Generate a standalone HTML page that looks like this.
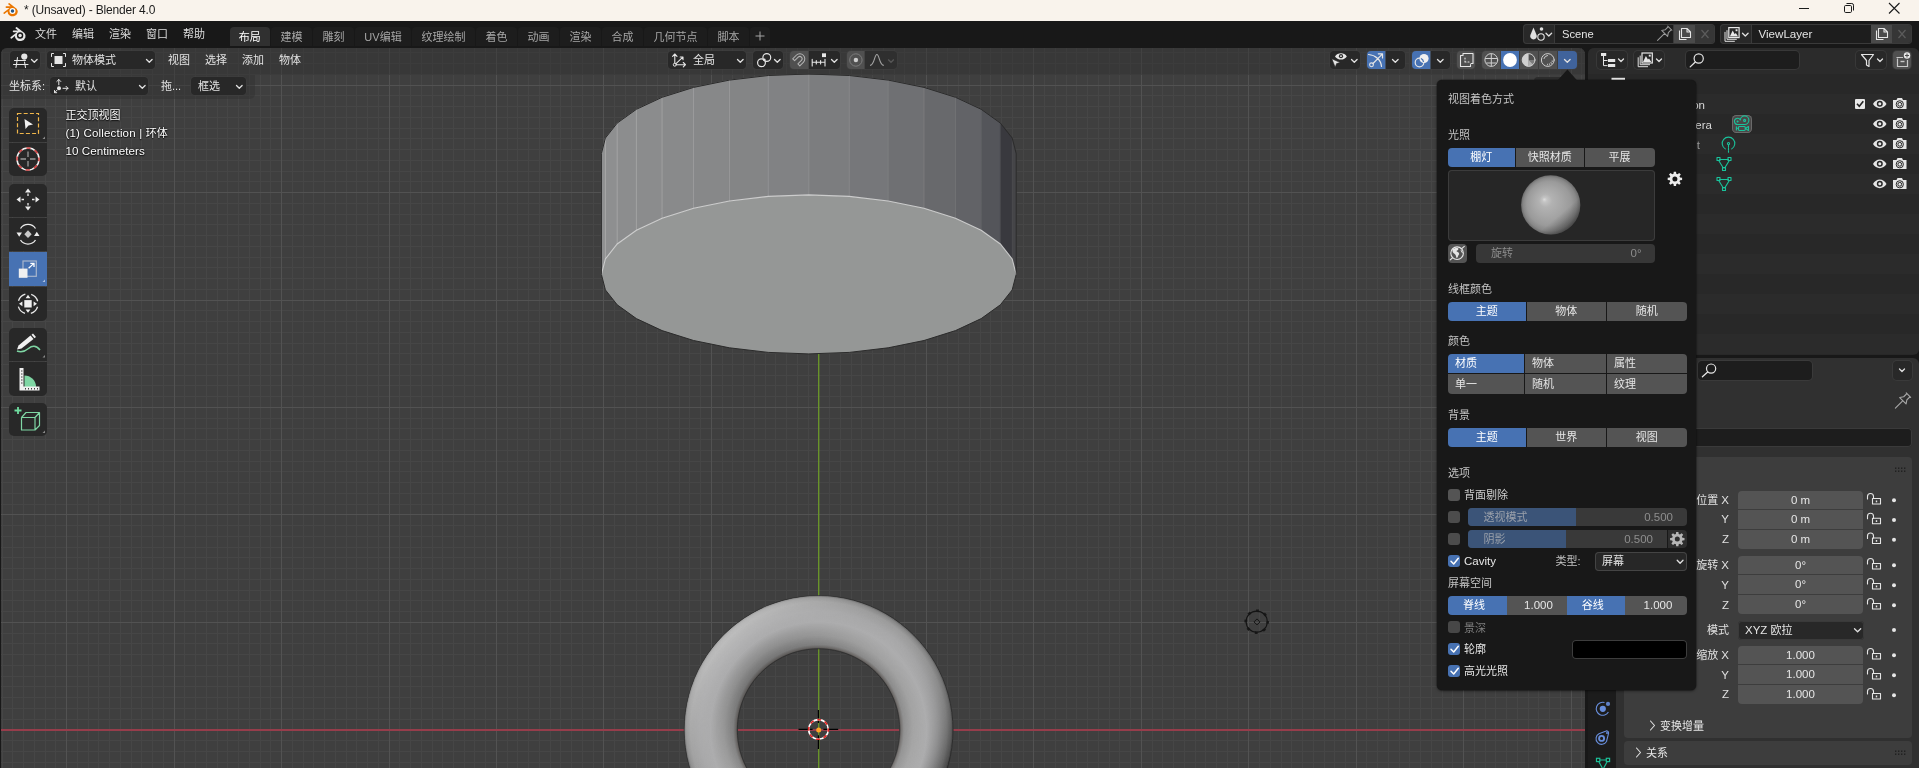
<!DOCTYPE html>
<html lang="zh-CN">
<head>
<meta charset="utf-8">
<title>* (Unsaved) - Blender 4.0</title>
<style>
html,body{margin:0;padding:0;background:#181818;}
body{width:1919px;height:768px;overflow:hidden;position:relative;font-family:"Liberation Sans","Noto Sans CJK SC",sans-serif;font-size:11px;color:#e0e0e0;}
div{box-sizing:border-box}
.a{position:absolute;white-space:nowrap;}
svg{position:absolute;overflow:visible}
#titlebar{position:absolute;left:0;top:0;width:1919px;height:21px;background:#f9f3ec;color:#1b1b1b;}
#topbar{position:absolute;left:0;top:21px;width:1919px;height:27px;background:#181818;}
.mi{position:absolute;top:26px;height:16px;line-height:16px;white-space:nowrap;color:#dcdcdc;font-size:11px}
.tab{position:absolute;top:27px;height:19px;line-height:20px;border-radius:4px 4px 0 0;background:#1d1d1d;color:#a6a6a6;text-align:center;white-space:nowrap;font-size:11px}
.tab.on{background:#303030;color:#fff;}
#vp{position:absolute;left:1px;top:48px;width:1584px;height:720px;background:#3f3f3f;border-radius:6px 6px 0 0;overflow:hidden;}
.hb{position:absolute;height:18px;background:#282828;border-radius:4px;box-shadow:0 0 0 1px rgba(62,62,62,0.7);}
.hb.blue{background:#4772b3;}
.hb.grey{background:#505050;}
.hb.l{border-radius:4px 0 0 4px}
.hb.r{border-radius:0 4px 4px 0}
.hb.m{border-radius:0}
.ht{position:absolute;height:18px;line-height:18px;white-space:nowrap;color:#e2e2e2;font-size:11px}
.tb{position:absolute;left:9px;width:38px;height:34px;background:#282828;}
.tb.on{background:#4772b3;}
.ic{stroke:#e6e6e6;fill:none;stroke-width:1.2;stroke-linecap:round;stroke-linejoin:round}
.chev{stroke:#e0e0e0;fill:none;stroke-width:1.3;stroke-linecap:round;stroke-linejoin:round}
</style>
</head>
<body>
<div id="root" style="position:absolute;left:0;top:0;width:1919px;height:768px;will-change:transform;overflow:hidden">
<!-- TITLE BAR -->
<div id="titlebar">
  <svg style="left:3px;top:3px" width="16" height="14" viewBox="0 0 16 14">
    <path d="M0.7 9.4 L6.6 4.9 L3.4 4.9 A0.85 0.85 0 0 1 3.4 3.2 L7.6 3.2 L5.5 1.6 A0.85 0.85 0 0 1 6.6 0.3 L13.6 5.7 A5.1 4.7 0 1 1 4.5 8.6 L1.7 10.8 A0.85 0.85 0 0 1 0.7 9.4 Z" fill="#ea7600"/>
    <circle cx="9.5" cy="8" r="3" fill="#fff"/>
    <circle cx="9.5" cy="8" r="1.75" fill="#265787"/>
  </svg>
  <div class="a" style="left:24px;top:2px;font-size:12px;letter-spacing:-0.17px;line-height:16px;">* (Unsaved) - Blender 4.0</div>
  <svg style="left:1799px;top:0" width="110" height="21" viewBox="1800 0 110 21">
    <path d="M1800 8.5H1810" stroke="#1b1b1b" stroke-width="1" fill="none"/>
    <rect x="1845.5" y="5.5" width="7" height="7" rx="1.2" stroke="#1b1b1b" stroke-width="1" fill="none"/>
    <path d="M1847.5 3.5H1852.8A1.7 1.7 0 0 1 1854.5 5.2V10.5" stroke="#1b1b1b" stroke-width="1" fill="none"/>
    <path d="M1890 3L1900.5 13.5M1900.5 3L1890 13.5" stroke="#1b1b1b" stroke-width="1.1" fill="none"/>
  </svg>
</div>
<!-- TOPBAR -->
<div id="topbar"></div>
<svg style="left:9.500px;top:27px" width="17" height="14.800" viewBox="0 0 16 14">
  <path d="M0.7 9.4 L6.6 4.9 L3.4 4.9 A0.85 0.85 0 0 1 3.4 3.2 L7.6 3.2 L5.5 1.6 A0.85 0.85 0 0 1 6.6 0.3 L13.6 5.7 A5.1 4.7 0 1 1 4.5 8.6 L1.7 10.8 A0.85 0.85 0 0 1 0.7 9.4 Z" fill="#e6e6e6"/>
  <circle cx="9.5" cy="8" r="3" fill="#181818"/>
  <circle cx="9.5" cy="8" r="1.6" fill="#e6e6e6"/>
</svg>
<div class="mi" style="left:35px">文件</div>
<div class="mi" style="left:72px">编辑</div>
<div class="mi" style="left:109px">渲染</div>
<div class="mi" style="left:146px">窗口</div>
<div class="mi" style="left:183px">帮助</div>
<div class="tab on" style="left:229.5px;width:40.5px">布局</div>
<div class="tab" style="left:271px;width:41px">建模</div>
<div class="tab" style="left:313px;width:41px">雕刻</div>
<div class="tab" style="left:355px;width:56px">UV编辑</div>
<div class="tab" style="left:412px;width:63px">纹理绘制</div>
<div class="tab" style="left:476px;width:41px">着色</div>
<div class="tab" style="left:518px;width:41px">动画</div>
<div class="tab" style="left:560px;width:41px">渲染</div>
<div class="tab" style="left:602px;width:41px">合成</div>
<div class="tab" style="left:644px;width:63px">几何节点</div>
<div class="tab" style="left:708px;width:41px">脚本</div>
<div class="tab" style="left:750px;width:20px"></div>
<svg style="left:755px;top:31px" width="10" height="10" viewBox="0 0 10 10"><path d="M5 0.5V9.5M0.5 5H9.5" stroke="#a6a6a6" stroke-width="1" fill="none"/></svg>
<!-- scene selector -->
<div class="a" style="left:1523px;top:24px;width:192px;height:20px;border-radius:4px;background:#282828;box-shadow:0 0 0 1px #3a3a3a inset"></div>
<div class="a" style="left:1554px;top:24px;width:120px;height:20px;background:#1d1d1d;box-shadow:0 0 0 1px #3a3a3a inset"></div>
<div class="a" style="left:1674px;top:25px;width:21px;height:18px;background:#4a4a4a;"></div>
<div class="a" style="left:1695px;top:25px;width:19px;height:18px;background:#363636;border-radius:0 3px 3px 0"></div>
<div class="a" style="left:1562px;top:24px;line-height:20px;font-size:11.2px;color:#e4e4e4">Scene</div>
<div class="a" style="left:1720px;top:24px;width:192px;height:20px;border-radius:4px;background:#282828;box-shadow:0 0 0 1px #3a3a3a inset"></div>
<div class="a" style="left:1751px;top:24px;width:121px;height:20px;background:#1d1d1d;box-shadow:0 0 0 1px #3a3a3a inset"></div>
<div class="a" style="left:1871px;top:25px;width:21px;height:18px;background:#4a4a4a;"></div>
<div class="a" style="left:1892px;top:25px;width:19px;height:18px;background:#363636;border-radius:0 3px 3px 0"></div>
<div class="a" style="left:1758.5px;top:24px;line-height:20px;font-size:11.6px;color:#e4e4e4">ViewLayer</div>
<svg style="left:1520px;top:21px" width="399" height="27" viewBox="1520 21 399 27">
  <!-- scene icon -->
  <path d="M1533.5 27.5 L1536.6 35 A3.3 3.3 0 1 1 1530.4 35 Z" fill="#e0e0e0"/>
  <circle cx="1541" cy="37" r="3.2" class="ic" style="stroke-width:1.1"/>
  <circle cx="1541.5" cy="29" r="1.8" fill="#e0e0e0"/>
  <path d="M1546 33.200L1548.800 36L1551.600 33.200" class="chev"/>
  <!-- pin -->
  <path transform="translate(1665 33) rotate(45) scale(1.050)" d="M-2.800 -6.500H2.800M-2 -6.500V-2.500L-4 0.500H4L2 -2.500V-6.500M0 0.500V10" stroke="#9a9a9a" stroke-width="1" fill="none" stroke-linecap="round" stroke-linejoin="round"/>
  <!-- copy -->
  <path d="M1679.5 30.5V39.5H1686.5M1681.5 28.5H1687L1690.5 32V37.5H1681.5Z M1687 28.5V32H1690.5" stroke="#e6e6e6" stroke-width="1.1" fill="none" stroke-linejoin="round"/>
  <path d="M1701.5 30L1708.5 38M1708.5 30L1701.5 38" stroke="#5c5c5c" stroke-width="1.2" fill="none"/>
  <!-- viewlayer icon -->
  <g transform="translate(1728.8 27.6)"><path d="M-1.800 2.600V11.700H8M-3.800 4.300V13.700H6" stroke="#e0e0e0" stroke-width="1" fill="none"/><rect x="0" y="0" width="10.300" height="10" stroke="#e8e8e8" stroke-width="1.200" fill="#282828"/><path d="M1 9L3.900 3L5.900 6.600L7 5.400L9.300 9Z" fill="#e8e8e8"/><rect x="6.800" y="1.700" width="1.900" height="1.900" fill="#e8e8e8"/></g>
  <path d="M1742.500 33.200L1745.300 36L1748.100 33.200" class="chev"/>
  <path d="M1876.5 30.5V39.5H1883.5M1878.5 28.5H1884L1887.5 32V37.5H1878.5Z M1884 28.5V32H1887.5" stroke="#e6e6e6" stroke-width="1.1" fill="none" stroke-linejoin="round"/>
  <path d="M1898.5 30L1905.5 38M1905.5 30L1898.5 38" stroke="#5c5c5c" stroke-width="1.2" fill="none"/>
</svg>
<!-- VIEWPORT -->
<div id="vp">
<svg style="left:0;top:0" width="1584" height="720" viewBox="1 48 1584 720">
  <defs>
    <linearGradient id="cylg" x1="601" x2="1016" y1="0" y2="0" gradientUnits="userSpaceOnUse">
      <stop offset="0" stop-color="#8d8e8f"/>
      <stop offset="0.25" stop-color="#858687"/>
      <stop offset="0.5" stop-color="#7e7f81"/>
      <stop offset="0.75" stop-color="#727377"/>
      <stop offset="0.9" stop-color="#65666a"/>
      <stop offset="0.955" stop-color="#56575b"/>
      <stop offset="0.965" stop-color="#3e3e43"/>
      <stop offset="1" stop-color="#38383c"/>
    </linearGradient>
    <radialGradient id="torg" cx="818.6" cy="730" r="135" gradientUnits="userSpaceOnUse">
      <stop offset="0.6015" stop-color="#4e4a48"/>
      <stop offset="0.612" stop-color="#6e6b69"/>
      <stop offset="0.632" stop-color="#8c8c8c"/>
      <stop offset="0.70" stop-color="#a2a2a2"/>
      <stop offset="0.80" stop-color="#adadae"/>
      <stop offset="0.88" stop-color="#a8a8a9"/>
      <stop offset="0.95" stop-color="#9c9c9c"/>
      <stop offset="0.98" stop-color="#868686"/>
      <stop offset="0.9956" stop-color="#5c5c5c"/>
    </radialGradient>
    <linearGradient id="torl" x1="723" y1="635" x2="914" y2="825" gradientUnits="userSpaceOnUse">
      <stop offset="0" stop-color="#fff" stop-opacity="0.42"/>
      <stop offset="0.45" stop-color="#888" stop-opacity="0"/>
      <stop offset="1" stop-color="#000" stop-opacity="0.55"/>
    </linearGradient>
    <linearGradient id="torl2" x1="723" y1="635" x2="914" y2="825" gradientUnits="userSpaceOnUse">
      <stop offset="0" stop-color="#000" stop-opacity="0.42"/>
      <stop offset="0.5" stop-color="#888" stop-opacity="0"/>
      <stop offset="1" stop-color="#fff" stop-opacity="0.30"/>
    </linearGradient>
    <radialGradient id="rmo" cx="818.6" cy="730" r="135" gradientUnits="userSpaceOnUse">
      <stop offset="0.80" stop-color="#000"/><stop offset="0.97" stop-color="#fff"/>
    </radialGradient>
    <radialGradient id="rmi" cx="818.6" cy="730" r="135" gradientUnits="userSpaceOnUse">
      <stop offset="0.62" stop-color="#fff"/><stop offset="0.80" stop-color="#000"/>
    </radialGradient>
    <mask id="mo" maskUnits="userSpaceOnUse" x="680" y="590" width="280" height="180"><circle cx="818.6" cy="730" r="134.4" fill="url(#rmo)"/></mask>
    <mask id="mi" maskUnits="userSpaceOnUse" x="680" y="590" width="280" height="180"><circle cx="818.6" cy="730" r="134.4" fill="url(#rmi)"/></mask>
    <clipPath id="torc"><path d="M818.6 595.6 A134.4 134.4 0 1 0 818.7 595.6 Z M818.6 648.8 A81.2 81.2 0 1 1 818.5 648.8 Z" clip-rule="evenodd"/></clipPath>
  </defs>
  <path d="M2.5 48V768M12.5 48V768M23.5 48V768M34.5 48V768M45.5 48V768M55.5 48V768M77.5 48V768M88.5 48V768M98.5 48V768M109.5 48V768M120.5 48V768M131.5 48V768M141.5 48V768M152.5 48V768M163.5 48V768M184.5 48V768M195.5 48V768M206.5 48V768M217.5 48V768M227.5 48V768M238.5 48V768M249.5 48V768M260.5 48V768M270.5 48V768M292.5 48V768M303.5 48V768M313.5 48V768M324.5 48V768M335.5 48V768M346.5 48V768M356.5 48V768M367.5 48V768M378.5 48V768M399.5 48V768M410.5 48V768M421.5 48V768M432.5 48V768M442.5 48V768M453.5 48V768M464.5 48V768M474.5 48V768M485.5 48V768M507.5 48V768M517.5 48V768M528.5 48V768M539.5 48V768M550.5 48V768M560.5 48V768M571.5 48V768M582.5 48V768M593.5 48V768M614.5 48V768M625.5 48V768M636.5 48V768M646.5 48V768M657.5 48V768M668.5 48V768M679.5 48V768M689.5 48V768M700.5 48V768M722.5 48V768M732.5 48V768M743.5 48V768M754.5 48V768M765.5 48V768M775.5 48V768M786.5 48V768M797.5 48V768M808.5 48V768M829.5 48V768M840.5 48V768M851.5 48V768M861.5 48V768M872.5 48V768M883.5 48V768M894.5 48V768M904.5 48V768M915.5 48V768M937.5 48V768M947.5 48V768M958.5 48V768M969.5 48V768M980.5 48V768M990.5 48V768M1001.5 48V768M1012.5 48V768M1023.5 48V768M1044.5 48V768M1055.5 48V768M1066.5 48V768M1076.5 48V768M1087.5 48V768M1098.5 48V768M1109.5 48V768M1119.5 48V768M1130.5 48V768M1152.5 48V768M1162.5 48V768M1173.5 48V768M1184.5 48V768M1195.5 48V768M1205.5 48V768M1216.5 48V768M1227.5 48V768M1238.5 48V768M1259.5 48V768M1270.5 48V768M1281.5 48V768M1291.5 48V768M1302.5 48V768M1313.5 48V768M1324.5 48V768M1334.5 48V768M1345.5 48V768M1366.5 48V768M1377.5 48V768M1388.5 48V768M1399.5 48V768M1409.5 48V768M1420.5 48V768M1431.5 48V768M1442.5 48V768M1452.5 48V768M1474.5 48V768M1485.5 48V768M1495.5 48V768M1506.5 48V768M1517.5 48V768M1528.5 48V768M1538.5 48V768M1549.5 48V768M1560.5 48V768M1581.5 48V768M1 52.5H1585M1 63.5H1585M1 74.5H1585M1 95.5H1585M1 106.5H1585M1 117.5H1585M1 128.5H1585M1 138.5H1585M1 149.5H1585M1 160.5H1585M1 171.5H1585M1 181.5H1585M1 203.5H1585M1 214.5H1585M1 224.5H1585M1 235.5H1585M1 246.5H1585M1 257.5H1585M1 267.5H1585M1 278.5H1585M1 289.5H1585M1 310.5H1585M1 321.5H1585M1 332.5H1585M1 343.5H1585M1 353.5H1585M1 364.5H1585M1 375.5H1585M1 385.5H1585M1 396.5H1585M1 418.5H1585M1 428.5H1585M1 439.5H1585M1 450.5H1585M1 461.5H1585M1 471.5H1585M1 482.5H1585M1 493.5H1585M1 504.5H1585M1 525.5H1585M1 536.5H1585M1 547.5H1585M1 557.5H1585M1 568.5H1585M1 579.5H1585M1 590.5H1585M1 600.5H1585M1 611.5H1585M1 633.5H1585M1 643.5H1585M1 654.5H1585M1 665.5H1585M1 676.5H1585M1 686.5H1585M1 697.5H1585M1 708.5H1585M1 719.5H1585M1 740.5H1585M1 751.5H1585M1 762.5H1585" stroke="#464646" stroke-width="1" fill="none"/>
  <path d="M66.5 48V768M174.5 48V768M281.5 48V768M389.5 48V768M496.5 48V768M603.5 48V768M711.5 48V768M926.5 48V768M1033.5 48V768M1141.5 48V768M1248.5 48V768M1356.5 48V768M1463.5 48V768M1571.5 48V768M1 85.5H1585M1 192.5H1585M1 300.5H1585M1 407.5H1585M1 514.5H1585M1 622.5H1585" stroke="#525252" stroke-width="1" fill="none"/>
  <!-- axes -->
  <path d="M1 730H1585" stroke="#963d4b" stroke-width="2"/>
  <path d="M818.7 74V768" stroke="#69942a" stroke-width="1.4"/>
  <!-- cylinder -->
  <path d="M601.4 153.5L605.4 138.0L605.4 258.9L601.4 274.4Z" fill="#8f9091" stroke="#8f9091" stroke-width="0.6"/>
  <path d="M605.4 138.0L617.2 123.1L617.2 244.0L605.4 258.9Z" fill="#8e8f90" stroke="#8e8f90" stroke-width="0.6"/>
  <path d="M617.2 123.1L636.4 109.3L636.4 230.2L617.2 244.0Z" fill="#8c8d8e" stroke="#8c8d8e" stroke-width="0.6"/>
  <path d="M636.4 109.3L662.1 97.3L662.1 218.2L636.4 230.2Z" fill="#8b8c8d" stroke="#8b8c8d" stroke-width="0.6"/>
  <path d="M662.1 97.3L693.6 87.4L693.6 208.3L662.1 218.2Z" fill="#898a8b" stroke="#898a8b" stroke-width="0.6"/>
  <path d="M693.6 87.4L729.4 80.1L729.4 201.0L693.6 208.3Z" fill="#878889" stroke="#878889" stroke-width="0.6"/>
  <path d="M729.4 80.1L768.3 75.5L768.3 196.4L729.4 201.0Z" fill="#848586" stroke="#848586" stroke-width="0.6"/>
  <path d="M768.3 75.5L808.8 74.0L808.8 194.9L768.3 196.4Z" fill="#818284" stroke="#818284" stroke-width="0.6"/>
  <path d="M808.8 74.0L849.3 75.5L849.3 196.4L808.8 194.9Z" fill="#7c7d7f" stroke="#7c7d7f" stroke-width="0.6"/>
  <path d="M849.3 75.5L888.2 80.1L888.2 201.0L849.3 196.4Z" fill="#76777a" stroke="#76777a" stroke-width="0.6"/>
  <path d="M888.2 80.1L924.0 87.4L924.0 208.3L888.2 201.0Z" fill="#6f7073" stroke="#6f7073" stroke-width="0.6"/>
  <path d="M924.0 87.4L955.5 97.3L955.5 218.2L924.0 208.3Z" fill="#68696c" stroke="#68696c" stroke-width="0.6"/>
  <path d="M955.5 97.3L981.2 109.3L981.2 230.2L955.5 218.2Z" fill="#626367" stroke="#626367" stroke-width="0.6"/>
  <path d="M981.2 109.3L1000.4 123.1L1000.4 244.0L981.2 230.2Z" fill="#54555a" stroke="#54555a" stroke-width="0.6"/>
  <path d="M1000.4 123.1L1012.2 138.0L1012.2 258.9L1000.4 244.0Z" fill="#39393e" stroke="#39393e" stroke-width="0.6"/>
  <path d="M1012.2 138.0L1016.2 153.5L1016.2 274.4L1012.2 258.9Z" fill="#454548" stroke="#454548" stroke-width="0.6"/>
  <path d="M605.4 138.0V258.9" stroke="#d0d0d0" stroke-opacity="0.44" stroke-width="1"/>
  <path d="M617.2 123.1V244.0" stroke="#d0d0d0" stroke-opacity="0.41" stroke-width="1"/>
  <path d="M636.4 109.3V230.2" stroke="#d0d0d0" stroke-opacity="0.38" stroke-width="1"/>
  <path d="M662.1 97.3V218.2" stroke="#d0d0d0" stroke-opacity="0.36" stroke-width="1"/>
  <path d="M693.6 87.4V208.3" stroke="#d0d0d0" stroke-opacity="0.33" stroke-width="1"/>
  <path d="M729.4 80.1V201.0" stroke="#d0d0d0" stroke-opacity="0.30" stroke-width="1"/>
  <path d="M768.3 75.5V196.4" stroke="#d0d0d0" stroke-opacity="0.27" stroke-width="1"/>
  <path d="M808.8 74.0V194.9" stroke="#d0d0d0" stroke-opacity="0.25" stroke-width="1"/>
  <path d="M849.3 75.5V196.4" stroke="#d0d0d0" stroke-opacity="0.22" stroke-width="1"/>
  <path d="M888.2 80.1V201.0" stroke="#d0d0d0" stroke-opacity="0.19" stroke-width="1"/>
  <path d="M924.0 87.4V208.3" stroke="#d0d0d0" stroke-opacity="0.17" stroke-width="1"/>
  <path d="M955.5 97.3V218.2" stroke="#d0d0d0" stroke-opacity="0.14" stroke-width="1"/>
  <path d="M981.2 109.3V230.2" stroke="#d0d0d0" stroke-opacity="0.12" stroke-width="1"/>
  <path d="M1000.4 123.1V244.0" stroke="#d0d0d0" stroke-opacity="0.09" stroke-width="1"/>
  <path d="M1012.2 138.0V258.9" stroke="#d0d0d0" stroke-opacity="0.07" stroke-width="1"/>
  <path d="M808.8 194.9L849.3 196.4L888.2 201.0L924.0 208.3L955.5 218.2L981.2 230.2L1000.4 244.0L1012.2 258.9L1016.2 274.4L1012.2 289.9L1000.4 304.8L981.2 318.6L955.5 330.6L924.0 340.5L888.2 347.8L849.3 352.4L808.8 353.9L768.3 352.4L729.4 347.8L693.6 340.5L662.1 330.6L636.4 318.6L617.2 304.8L605.4 289.9L601.4 274.4L605.4 258.9L617.2 244.0L636.4 230.2L662.1 218.2L693.6 208.3L729.4 201.0L768.3 196.4Z" fill="#959796"/>
  <path d="M601.4 274.4L605.4 258.9L617.2 244.0L636.4 230.2L662.1 218.2L693.6 208.3L729.4 201.0L768.3 196.4L808.8 194.9L849.3 196.4L888.2 201.0L924.0 208.3L955.5 218.2L981.2 230.2L1000.4 244.0L1012.2 258.9L1016.2 274.4" stroke="#dedede" stroke-opacity="0.8" stroke-width="1.1" fill="none"/>
  <path d="M601.4 153.5L605.4 138.0L617.2 123.1L636.4 109.3L662.1 97.3L693.6 87.4L729.4 80.1L768.3 75.5L808.8 74.0L849.3 75.5L888.2 80.1L924.0 87.4L955.5 97.3L981.2 109.3L1000.4 123.1L1012.2 138.0L1016.2 153.5L1016.2 274.4L1012.2 289.9L1000.4 304.8L981.2 318.6L955.5 330.6L924.0 340.5L888.2 347.8L849.3 352.4L808.8 353.9L768.3 352.4L729.4 347.8L693.6 340.5L662.1 330.6L636.4 318.6L617.2 304.8L605.4 289.9L601.4 274.4Z" stroke="#2b2b2b" stroke-width="1" fill="none" stroke-linejoin="round"/>
  <!-- torus -->
  <path d="M818.6 595.6 A134.4 134.4 0 1 0 818.7 595.6 Z M818.6 648.8 A81.2 81.2 0 1 1 818.5 648.8 Z" fill="url(#torg)" fill-rule="evenodd" stroke="#303030" stroke-width="1"/>
  <g clip-path="url(#torc)"><g mask="url(#mo)"><rect x="680" y="590" width="280" height="180" fill="url(#torl)"/></g><g mask="url(#mi)"><rect x="680" y="590" width="280" height="180" fill="url(#torl2)"/></g></g>
  <!-- 3d cursor -->
  <path d="M798.5 729.3H812.600M823.400 729.300H838.200M818.400 710V723M818.400 735.200V749" stroke="#000" stroke-width="1.200"/>
  <circle cx="818.500" cy="729.400" r="9.800" fill="none" stroke="#fff" stroke-width="1.600"/>
  <circle cx="818.500" cy="729.400" r="9.800" fill="none" stroke="#e62222" stroke-width="1.600" stroke-dasharray="3.850 3.850" stroke-dashoffset="1.500"/>
  <circle cx="818.700" cy="729.900" r="2.500" fill="#ffa229"/>
  <!-- light -->
  <circle cx="1256.700" cy="621.700" r="10.600" fill="none" stroke="#141414" stroke-width="1.100"/>
  <circle cx="1256.700" cy="621.700" r="11" fill="none" stroke="#141414" stroke-width="2.600" stroke-opacity="0.900" stroke-dasharray="2.800 5.840" stroke-dashoffset="1"/>
  <path d="M1257 618.900L1260 621.900L1257 624.900L1254 621.900Z" fill="none" stroke="#141414" stroke-width="1"/>
</svg>
</div>
<!-- viewport header overlays -->
<div class="a" style="left:1px;top:48px;width:1584px;height:27px;background:rgba(48,48,48,0.47);border-radius:6px 6px 0 0"></div>
<div class="a" style="left:1px;top:75px;width:254px;height:24px;background:rgba(48,48,48,0.47);border-radius:0 0 5px 0"></div>
<!-- left header -->
<div class="hb" style="left:10px;top:51px;width:30px"></div>
<div class="hb" style="left:47px;top:51px;width:108px"></div>
<div class="ht" style="left:72px;top:51px">物体模式</div>
<div class="ht" style="left:168px;top:51px">视图</div>
<div class="ht" style="left:205px;top:51px">选择</div>
<div class="ht" style="left:242px;top:51px">添加</div>
<div class="ht" style="left:279px;top:51px">物体</div>
<div class="ht" style="left:9px;top:77px">坐标系:</div>
<div class="hb" style="left:50px;top:77px;width:98px"></div>
<div class="ht" style="left:75px;top:77px">默认</div>
<div class="ht" style="left:161px;top:77px">拖...</div>
<div class="hb" style="left:191px;top:77px;width:55px"></div>
<div class="ht" style="left:198px;top:77px">框选</div>
<!-- center header -->
<div class="hb" style="left:668px;top:51px;width:78px"></div>
<div class="ht" style="left:693px;top:51px">全局</div>
<div class="hb" style="left:753px;top:51px;width:30px"></div>
<div class="hb grey l" style="left:790px;top:51px;width:18.5px"></div>
<div class="hb r" style="left:808.5px;top:51px;width:31.5px"></div>
<div class="hb grey l" style="left:847px;top:51px;width:18px"></div>
<div class="hb r" style="left:865px;top:51px;width:32px;background:#2f2f2f"></div>
<!-- right header -->
<div class="hb" style="left:1330px;top:51px;width:30px"></div>
<div class="hb blue l" style="left:1367px;top:51px;width:18.5px"></div>
<div class="hb r" style="left:1385.5px;top:51px;width:19.5px"></div>
<div class="hb blue l" style="left:1412px;top:51px;width:18.5px"></div>
<div class="hb r" style="left:1430.5px;top:51px;width:19.5px"></div>
<div class="hb grey" style="left:1457px;top:51px;width:18px"></div>
<div class="hb grey l" style="left:1482px;top:51px;width:18.5px"></div>
<div class="hb blue m" style="left:1501px;top:51px;width:18px"></div>
<div class="hb grey m" style="left:1519.5px;top:51px;width:18.5px"></div>
<div class="hb grey m" style="left:1538.5px;top:51px;width:18.5px"></div>
<div class="hb r" style="left:1557.5px;top:51px;width:19.5px;background:#40639b"></div>
<svg style="left:0;top:48px" width="1585" height="51" viewBox="0 48 1585 51">
  <!-- editor type icon: 3d view -->
  <path d="M14.5 60.5H25.5M13.5 64.5H28M17.5 57.5L16 67.5M24.5 62L25.5 67.5" class="ic" style="stroke-width:1.1"/>
  <circle cx="24.3" cy="56.6" r="3.1" fill="#e6e6e6"/>
  <path d="M31.5 59.5L34.3 62.3L37.1 59.5" class="chev"/>
  <!-- object mode icon -->
  <rect x="54.5" y="56" width="8" height="8" fill="#e6e6e6"/>
  <path d="M53.5 53.5H51.5V56.5M63.5 53.5H65.5V56.5M53.5 66.5H51.5V63.5M63.5 66.5H65.5V63.5" class="ic" style="stroke-width:1"/>
  <path d="M146.5 59.5L149.3 62.3L152.1 59.5" class="chev"/>
  <!-- orientation default icon -->
  <path d="M58.8 79.5V84.8M56.8 81.5L58.8 79.5L60.8 81.5M63 88.3H68M66 86.3L68 88.3L66 90.3M57 90.2L54.5 92.7M54.5 90.5V92.7H56.7" class="ic" style="stroke-width:1"/>
  <circle cx="59" cy="88.3" r="2" fill="#e6e6e6"/>
  <path d="M139.5 85.5L142.3 88.3L145.1 85.5" class="chev"/>
  <path d="M236.5 85.5L239.3 88.3L242.1 85.5" class="chev"/>
  <!-- global orientation icon -->
  <path d="M674.8 54V63M672.6 56.300L674.800 54L677 56.300M676.500 64.700H685.500M683.300 62.500L685.500 64.700L683.300 66.900M676.300 63.300L682.800 57.200M680.200 57H683V59.800" class="ic" style="stroke-width:1.100"/>
  <circle cx="674.800" cy="64.700" r="1.500" class="ic" style="stroke-width:1"/>
  <path d="M737.5 59.5L740.3 62.3L743.1 59.5" class="chev"/>
  <!-- pivot icon -->
  <circle cx="761.500" cy="62.800" r="3.900" class="ic" style="stroke-width:1.200"/>
  <circle cx="766.800" cy="57.500" r="3.900" class="ic" style="stroke-width:1.200"/>
  <circle cx="764.300" cy="59.700" r="1.300" fill="#e6e6e6"/>
  <path d="M774.5 59.5L777.3 62.3L780.1 59.5" class="chev"/>
  <!-- snap magnet -->
  <path transform="translate(799.800 58.800) rotate(45)" d="M-5 5V0A5 5 0 0 1 5 0V5H2.300V0A2.300 2.300 0 0 0 -2.300 0V5Z" stroke="#b4b4b4" stroke-width="1" fill="none" stroke-linejoin="round"/>
  <!-- snap increment -->
  <path d="M812.200 62.300H825M812.200 59.200V66M816.300 60.500V64M820.600 60.500V64M825 59.200V66" class="ic" style="stroke-width:1.100"/>
  <rect x="822" y="53.300" width="4" height="3.800" fill="#e6e6e6"/>
  <path d="M831.5 59.5L834.3 62.3L837.1 59.5" class="chev"/>
  <!-- proportional -->
  <circle cx="855.900" cy="60" r="6.200" stroke="#7c7c7c" stroke-width="1" fill="none"/>
  <circle cx="855.900" cy="60" r="2.200" fill="#cdcdcd"/>
  <path d="M870 65.400C874.500 65.400 874.300 54.500 876.900 54.500C879.500 54.500 879.300 65.400 883.800 65.400" stroke="#a4a4a4" stroke-width="1.100" fill="none"/>
  <path d="M888.200 59.500L891 62.300L893.800 59.500" stroke="#585858" stroke-width="1.300" fill="none"/>
  <!-- visibility -->
  <path d="M1335 56.400C1337.500 52.300 1344.500 52.300 1346.800 56.400C1344.500 60.500 1337.500 60.500 1335 56.400Z" fill="#e6e6e6"/>
  <circle cx="1341" cy="56.200" r="2.100" fill="#282828"/>
  <circle cx="1341" cy="56.200" r="0.900" fill="#e6e6e6"/>
  <path d="M1331.800 58.800L1340.200 62.600L1336.600 63.600L1335.200 67.200Z" fill="#e6e6e6" stroke="#282828" stroke-width="0.600"/>
  <path d="M1351.5 59.5L1354.3 62.3L1357.1 59.5" class="chev"/>
  <!-- gizmo -->
  <path d="M1368.500 54.500C1375.500 55 1381 60 1381.500 66.500M1373 63.500L1382 54.300M1378.300 53.800H1382.500V58" class="ic" style="stroke-width:1.200"/>
  <circle cx="1371.500" cy="64.800" r="1.900" class="ic" style="stroke-width:1.100"/>
  <path d="M1392.5 59.5L1395.3 62.3L1398.1 59.5" class="chev"/>
  <!-- overlay -->
  <circle cx="1424" cy="58.500" r="4.600" fill="#f0f0f0"/>
  <circle cx="1419.500" cy="62.500" r="4.300" class="ic" style="stroke-width:1.200"/>
  <path d="M1421 58.500A4.300 4.300 0 0 1 1423.500 62" stroke="#4772b3" stroke-width="1.200" fill="none"/>
  <path d="M1437.5 59.5L1440.3 62.3L1443.1 59.5" class="chev"/>
  <!-- xray -->
  <path d="M1462.500 55.500H1460.500V66.500H1470.500V64.500" class="ic" style="stroke-width:1.100"/>
  <path d="M1463 55.500V53.500H1473V63.500H1471" class="ic" style="stroke-width:1.100"/>
  <path d="M1465 58V59M1465 61V62H1466M1468 62H1469" class="ic" style="stroke-width:1.100"/>
  <!-- shading wire -->
  <circle cx="1491.300" cy="60" r="6.400" class="ic" style="stroke-width:1;stroke:#d0d0d0"/>
  <path d="M1485.500 58.500H1497M1486.500 63H1496M1491.300 54V66" class="ic" style="stroke-width:1;stroke:#d0d0d0"/>
  <circle cx="1510" cy="60" r="6.900" fill="#fff"/>
  <circle cx="1528.600" cy="60" r="6.400" class="ic" style="stroke-width:1;stroke:#d0d0d0"/>
  <path d="M1528.600 53.600A6.400 6.400 0 0 0 1528.600 66.400Z" fill="#d0d0d0"/>
  <path d="M1528.600 60V66.400A6.400 6.400 0 0 0 1533.200 64.500Z" fill="#d0d0d0" fill-opacity="0.750"/>
  <path d="M1528.600 60L1533.200 64.500A6.400 6.400 0 0 0 1535 60Z" fill="#d0d0d0" fill-opacity="0.350"/>
  <circle cx="1547.800" cy="60" r="6.400" class="ic" style="stroke-width:1;stroke:#d0d0d0"/>
  <path d="M1544 58.500A4 4 0 0 1 1547.500 55.500" class="ic" style="stroke-width:1;stroke:#d0d0d0"/>
  <path d="M1547 64.500A5 5 0 0 0 1552.500 60" stroke="#bbb" stroke-width="1.600" fill="none" stroke-dasharray="1 1"/>
  <path d="M1564.5 59.5L1567.3 62.3L1570.1 59.5" class="chev"/>
</svg>
<!-- toolbar -->
<div class="tb" style="top:108px;height:34px;border-radius:5px 5px 0 0"></div>
<div class="tb" style="top:142.500px;height:33.500px;border-radius:0 0 5px 5px"></div>
<div class="tb" style="top:183.500px;height:33px;border-radius:5px 5px 0 0"></div>
<div class="tb" style="top:217.500px;height:33.500px"></div>
<div class="tb on" style="top:251.500px;height:34.500px"></div>
<div class="tb" style="top:286.500px;height:34px;border-radius:0 0 5px 5px"></div>
<div class="tb" style="top:328px;height:33px;border-radius:5px 5px 0 0"></div>
<div class="tb" style="top:362px;height:34px;border-radius:0 0 5px 5px"></div>
<div class="tb" style="top:403px;height:33px;border-radius:5px"></div>
<svg style="left:0;top:100px" width="60" height="340" viewBox="0 100 60 340">
  <!-- select box -->
  <rect x="17.500" y="113.500" width="21" height="20" fill="none" stroke="#f0b64a" stroke-width="1.200" stroke-dasharray="4 2.200"/>
  <path d="M24.500 119L33 124.500L28.500 125.500L25.500 129Z" fill="#f2f2f2"/>
  <path d="M45 136.500V139H42.500Z" fill="#8a8a8a"/>
  <!-- cursor -->
  <circle cx="28" cy="159" r="11" fill="none" stroke="#f4f4f4" stroke-width="1.500"/>
  <circle cx="28" cy="159" r="11" fill="none" stroke="#d03a3a" stroke-width="1.500" stroke-dasharray="4.320 4.320" stroke-dashoffset="2"/>
  <path d="M20.500 159H26M30 159H35.500M28 151.500V157M28 161V166.500" stroke="#9a9a9a" stroke-width="1.300" fill="none"/>
  <!-- move -->
  <path d="M28 188.500L31 192.500H25ZM28 210.500L31 206.500H25ZM16.500 199.500L20.500 196.500V202.500ZM39.500 199.500L35.500 196.500V202.500Z" fill="#ececec"/>
  <path d="M28 193.500V196M28 203V205.500M21.500 199.500H24M32 199.500H34.500" stroke="#ececec" stroke-width="1.300" fill="none"/>
  <!-- rotate -->
  <path d="M20.500 228.500A9 9 0 0 1 35.500 228.500M35.500 240A9 9 0 0 1 20.500 240" stroke="#ececec" stroke-width="1.300" fill="none"/>
  <path d="M16.500 232.500H22L19.200 236.700ZM39.500 236L34 236L36.800 231.800Z" fill="#ececec"/>
  <path d="M28 230.300L31.700 234.200L28 238.100L24.300 234.200Z" fill="#c8c8c8"/>
  <!-- scale -->
  <rect x="23" y="261" width="13.300" height="15.300" stroke="#a9b6cc" stroke-width="1.200" fill="none"/>
  <rect x="18.800" y="268.600" width="8.700" height="9.200" fill="#f0f0f0"/>
  <path d="M28.600 268.300L33.600 263.600M30.300 263.300H34V267" stroke="#fff" stroke-width="1.300" fill="none"/>
  <path d="M45 279.500V282H42.500Z" fill="#b0c4e6"/>
  <!-- transform -->
  <circle cx="28" cy="303.800" r="10" fill="none" stroke="#e8e8e8" stroke-width="1.300" stroke-dasharray="9.700 6" stroke-dashoffset="-3"/>
  <rect x="24.300" y="300.100" width="7.400" height="7.400" fill="#f0f0f0"/>
  <path d="M28 294.800L30.400 298.200H25.600ZM28 312.800L30.400 309.400H25.600ZM19 303.800L22.400 301.400V306.200ZM37 303.800L33.600 301.400V306.200Z" fill="#f0f0f0"/>
  <!-- annotate -->
  <path d="M17 351C22 353 25 351.500 28.500 348.500C32 345.500 36 345 40 350" stroke="#7fd6a4" stroke-width="1.500" fill="none"/>
  <path d="M18.500 345.500L30.500 335.500L33.500 339L21.500 348.500L17 349.500Z" fill="#f0f0f0"/>
  <path d="M31.500 334.800L33 333.500L36 337L34.500 338.200Z" fill="#f0f0f0"/>
  <path d="M45 355V357.500H42.500Z" fill="#8a8a8a"/>
  <!-- measure -->
  <path d="M24.500 387V375.500A11.500 11.500 0 0 1 36 387Z" fill="#7fd6a4"/>
  <path d="M19.500 368H23.500V386.500H39.500V390.500H19.500Z" fill="#f0f0f0"/>
  <path d="M21 371H22.500M21 374H22.500M21 377H22.500M21 380H22.500M21 383H22.500M25.500 388V389.500M28.500 388V389.500M31.500 388V389.500M34.500 388V389.500M37.500 388V389.500" stroke="#282828" stroke-width="0.900"/>
  <!-- add cube -->
  <path d="M14.500 410.500H21.500M18 407V414" stroke="#6fdc9f" stroke-width="1.800" fill="none"/>
  <path d="M21.500 417.500H35V430H21.500ZM21.500 417.500L26 412.500H39.500L35 417.500M39.500 412.500V425.500L35 430" stroke="#7fd6a4" stroke-width="1.200" fill="none" stroke-linejoin="round"/>
  <path d="M45 430.500V433H42.500Z" fill="#8a8a8a"/>
</svg>
<!-- view text overlay -->
<div class="a" style="left:65.500px;top:107px;font-size:11px;line-height:16px;color:#fff;text-shadow:0 0 2px #000,0 1px 1px rgba(0,0,0,.7)">正交顶视图</div>
<div class="a" style="left:65.500px;top:125px;font-size:11.500px;letter-spacing:0.18px;line-height:16px;color:#fff;text-shadow:0 0 2px #000,0 1px 1px rgba(0,0,0,.7)">(1) Collection | <span style="font-size:11px">环体</span></div>
<div class="a" style="left:65.500px;top:143px;font-size:11.600px;letter-spacing:0.05px;line-height:16px;color:#fff;text-shadow:0 0 2px #000,0 1px 1px rgba(0,0,0,.7)">10 Centimeters</div>
<!-- OUTLINER -->
<div class="a" style="left:1588px;top:48px;width:331px;height:306.800px;background:#282828;border-radius:6px;overflow:hidden">
  <div class="a" style="left:0;top:0;width:331px;height:26px;background:#2b2b2b"></div>
  <div class="a" style="left:0;top:46px;width:331px;height:20px;background:#2b2b2b"></div>
  <div class="a" style="left:0;top:86px;width:331px;height:20px;background:#2b2b2b"></div>
  <div class="a" style="left:0;top:126px;width:331px;height:20px;background:#2b2b2b"></div>
  <div class="a" style="left:0;top:166px;width:331px;height:20px;background:#2b2b2b"></div>
  <div class="a" style="left:0;top:206px;width:331px;height:20px;background:#2b2b2b"></div>
  <div class="a" style="left:0;top:246px;width:331px;height:20px;background:#2b2b2b"></div>
  <div class="a" style="left:0;top:286px;width:331px;height:20px;background:#2b2b2b"></div>
</div>
<div class="hb" style="left:1597px;top:51px;width:29.500px;height:18px"></div>
<div class="hb" style="left:1634.300px;top:51px;width:29.500px;height:18px"></div>
<div class="hb" style="left:1686px;top:51px;width:113px;height:18px;background:#1d1d1d"></div>
<div class="hb" style="left:1856.300px;top:51px;width:29.500px;height:18px"></div>
<div class="hb grey" style="left:1893px;top:51px;width:18px;height:18px"></div>
<div class="a" style="left:1630px;top:78.5px;font-size:11px;line-height:16px;color:#d8d8d8">场景集合</div>
<div class="a" style="left:1654.500px;top:97px;font-size:11.500px;line-height:16px;color:#d8d8d8">Collection</div>
<div class="a" style="left:1671px;top:117px;font-size:11.500px;line-height:16px;color:#d8d8d8">Camera</div>
<div class="a" style="left:1675px;top:137px;font-size:11.500px;line-height:16px;color:#9a9a9a">Light</div>
<div class="a" style="left:1673px;top:156px;font-size:11px;line-height:16px;color:#d8d8d8">柱体</div>
<div class="a" style="left:1673px;top:176px;font-size:11px;line-height:16px;color:#d8d8d8">环体</div>
<div class="a" style="left:1732px;top:115px;width:20px;height:18px;border-radius:4.500px;background:#4a4848;box-shadow:0 0 0 1px #6a6a6a inset"></div>
<svg style="left:1588px;top:48px" width="331" height="310" viewBox="1588 48 331 310">
  <!-- outliner editor icon -->
  <rect x="1601" y="53" width="5.200" height="3" fill="#e6e6e6"/>
  <rect x="1608" y="59" width="7.200" height="3" fill="#e6e6e6"/>
  <rect x="1608" y="64" width="7.200" height="3" fill="#e6e6e6"/>
  <path d="M1603.500 56V65.600H1607.500M1603.500 60.500H1607.500" class="ic" style="stroke-width:1;stroke-linecap:butt"/>
  <path d="M1618.500 59L1621 61.500L1623.500 59" class="chev"/>
  <!-- display mode icon (view layer) -->
  <g transform="translate(1642 53)"><path d="M-1.800 2.600V11.700H8M-3.800 4.300V13.700H6" stroke="#e0e0e0" stroke-width="1" fill="none"/><rect x="0" y="0" width="10.300" height="10" stroke="#e8e8e8" stroke-width="1.200" fill="#282828"/><path d="M1 9L3.900 3L5.900 6.600L7 5.400L9.300 9Z" fill="#e8e8e8"/><rect x="6.800" y="1.700" width="1.900" height="1.900" fill="#e8e8e8"/></g>
  <path d="M1656.500 59L1659 61.500L1661.500 59" class="chev"/>
  <!-- search -->
  <circle cx="1698.700" cy="58.500" r="4.600" class="ic" style="stroke-width:1.200"/>
  <path d="M1695.300 62L1690.200 66.900" class="ic" style="stroke-width:1.300"/>
  <!-- filter -->
  <path d="M1861.500 54.500H1873.500L1869 60.500V66.500L1866.500 65V60.500Z" class="ic" style="stroke-width:1.200"/>
  <path d="M1877.500 59L1880 61.500L1882.500 59" class="chev"/>
  <!-- new collection -->
  <path d="M1896.500 57.500H1903M1897.500 58.500V66.500H1907.500V60" stroke="#c8c8c8" stroke-width="1.200" fill="none"/>
  <path d="M1900.500 61.500H1904.500" stroke="#c8c8c8" stroke-width="1.400"/>
  <circle cx="1907" cy="55.500" r="3.200" fill="#e6e6e6"/>
  <path d="M1905 55.500H1909M1907 53.500V57.500" stroke="#4d4d4d" stroke-width="1"/>
  <!-- scene collection icon peek -->
  <rect x="1611.500" y="77.800" width="13.500" height="3" fill="#e6e6e6"/>
  <!-- row icons -->
  <rect x="1855" y="99" width="10" height="10" rx="1" fill="#e8e8e8"/>
  <path d="M1857 103.800L1859.300 106.300L1863.300 101.300" stroke="#222" stroke-width="1.600" fill="none"/>
  <g id="eye"><path d="M1873 104C1876 98 1883.500 98 1886.500 104C1883.500 109.500 1876 109.500 1873 104Z" fill="#e6e6e6"/><circle cx="1879.800" cy="103.700" r="3" fill="#282828"/><circle cx="1879.800" cy="103.700" r="1.500" fill="#e6e6e6"/></g>
  <g id="cam"><path d="M1893 100H1896.500L1897.500 98H1902L1903 100H1906.500V109H1893Z" fill="#e6e6e6"/><circle cx="1899.800" cy="104.300" r="3.600" fill="none" stroke="#282828" stroke-width="1"/><circle cx="1899.800" cy="104.300" r="1.900" fill="none" stroke="#282828" stroke-width="1"/></g>
  <use href="#eye" y="20"/><use href="#cam" y="20"/>
  <use href="#eye" y="40"/><use href="#cam" y="40"/>
  <use href="#eye" y="60"/><use href="#cam" y="60"/>
  <use href="#eye" y="80"/><use href="#cam" y="80"/>
  <!-- camera data -->
  <g stroke="#1ac29b" stroke-width="1.100" fill="none" stroke-linejoin="round" stroke-linecap="round">
    <path d="M1737.500 124.500A3.100 3.100 0 1 1 1740.300 120A4.300 4.300 0 1 1 1744.500 124.500Z"/>
    <circle cx="1737.600" cy="121.500" r="0.500"/><circle cx="1744.600" cy="120.400" r="1"/>
    <path d="M1739.400 126.500H1744.300Q1745.200 126.500 1745.200 127.400V129.600Q1745.200 130.500 1744.300 130.500H1739.400Q1738.500 130.500 1738.500 129.600V127.400Q1738.500 126.500 1739.400 126.500ZM1745.200 128.400L1748.500 126.500V130.500ZM1738.500 128.300H1736.400M1736.400 126.700V129.900"/>
    <path d="M1725.300 148.900A6.300 6.300 0 1 1 1731.700 148.900"/>
    <circle cx="1728.500" cy="143.600" r="1.100"/>
    <path d="M1728.500 145V147.200M1728.500 148.400V150M1728.500 151V152.300"/>
    <path d="M1719.500 159.500H1728.500M1719 161L1723.300 168M1729 161L1724.700 168"/>
    <rect x="1717" y="157.500" width="3" height="3"/><rect x="1728" y="157.500" width="3" height="3"/><rect x="1722.500" y="167.500" width="3" height="3"/>
    <path d="M1719.500 179.500H1728.500M1719 181L1723.300 188M1729 181L1724.700 188"/>
    <rect x="1717" y="177.500" width="3" height="3"/><rect x="1728" y="177.500" width="3" height="3"/><rect x="1722.500" y="187.500" width="3" height="3"/>
  </g>
</svg>
<!-- PROPERTIES -->
<div class="a" style="left:1588px;top:357.500px;width:331px;height:412px;background:#303030;border-radius:6px 6px 0 0;overflow:hidden">
  <div class="a" style="left:0;top:26px;width:28px;height:390px;background:#1c1c1c"></div>
</div>
<div class="hb" style="left:1697.500px;top:360.500px;width:114px;height:19px;background:#1d1d1d"></div>
<div class="hb" style="left:1892.500px;top:360.500px;width:19px;height:19px"></div>
<div class="a" style="left:1640px;top:427.500px;width:271.500px;height:19px;border-radius:4px;background:#1d1d1d;box-shadow:0 0 0 1px #3a3a3a inset"></div>
<div class="a" style="left:1624px;top:457px;width:288px;height:280.500px;border-radius:4px;background:#3d3d3d"></div>
<div class="a" style="left:1624px;top:740.500px;width:288px;height:24px;border-radius:4px;background:#3d3d3d"></div>
<div class="a" style="left:1624px;top:767.500px;width:288px;height:23px;border-radius:4px;background:#3d3d3d"></div>
<style>
.fld{position:absolute;left:1738px;width:125px;height:19px;background:#545454;color:#e6e6e6;text-align:center;line-height:19px;font-size:11.500px}
.fld.t{border-radius:4px 4px 0 0}.fld.b{border-radius:0 0 4px 4px}
.lbl{position:absolute;left:1629px;width:100px;text-align:right;line-height:19px;height:19px;font-size:11px;color:#e0e0e0;white-space:nowrap}
.lbl b{font-weight:normal;font-size:11.500px}
</style>
<div class="lbl" style="top:491.1px;height:18.2px;line-height:18.2px">位置 <b>X</b></div>
<div class="fld t" style="top:490.8px;height:18.2px;line-height:18.2px">0 m</div>
<div class="lbl" style="top:510.3px;height:19px;line-height:19px"><b>Y</b></div>
<div class="fld" style="top:510px;height:19px;line-height:19px">0 m</div>
<div class="lbl" style="top:530.3px;height:19px;line-height:19px"><b>Z</b></div>
<div class="fld b" style="top:530px;height:19px;line-height:19px">0 m</div>
<div class="lbl" style="top:556.3px;height:18.4px;line-height:18.4px">旋转 <b>X</b></div>
<div class="fld t" style="top:556px;height:18.4px;line-height:18.4px">0°</div>
<div class="lbl" style="top:575.7px;height:18.8px;line-height:18.8px"><b>Y</b></div>
<div class="fld" style="top:575.4px;height:18.8px;line-height:18.8px">0°</div>
<div class="lbl" style="top:595.5px;height:19px;line-height:19px"><b>Z</b></div>
<div class="fld b" style="top:595.2px;height:19px;line-height:19px">0°</div>
<div class="lbl" style="top:620.800px">模式</div>
<div class="a" style="left:1738px;top:621px;width:126px;height:18.500px;border-radius:4px;background:#282828;box-shadow:0 0 0 1px #3a3a3a inset"></div>
<div class="a" style="left:1745px;top:621px;line-height:18.500px;font-size:11.500px;color:#e6e6e6">XYZ <span style="font-size:11px">欧拉</span></div>
<div class="lbl" style="top:646.3px;height:18.2px;line-height:18.2px">缩放 <b>X</b></div>
<div class="fld t" style="top:646px;height:18.2px;line-height:18.2px">1.000</div>
<div class="lbl" style="top:665.5px;height:18.8px;line-height:18.8px"><b>Y</b></div>
<div class="fld" style="top:665.2px;height:18.8px;line-height:18.8px">1.000</div>
<div class="lbl" style="top:685.3px;height:19.3px;line-height:19.3px"><b>Z</b></div>
<div class="fld b" style="top:685px;height:19.3px;line-height:19.3px">1.000</div>
<div class="a" style="left:1660px;top:717.500px;line-height:16px;font-size:11px;color:#e6e6e6">变换增量</div>
<div class="a" style="left:1646px;top:745px;line-height:16px;font-size:11px;color:#e6e6e6">关系</div>
<svg style="left:1588px;top:357px" width="331" height="411" viewBox="1588 357 331 411">
  <circle cx="1711.100" cy="368.600" r="4.600" class="ic" style="stroke-width:1.200"/>
  <path d="M1707.700 372L1702.400 376.700" class="ic" style="stroke-width:1.300"/>
  <path d="M1899.500 369L1902 371.500L1904.500 369" class="chev"/>
  <!-- pin -->
  <path transform="translate(1903.300 400.300) rotate(45) scale(1.120)" d="M-2.800 -6.500H2.800M-2 -6.500V-2.500L-4 0.500H4L2 -2.500V-6.500M0 0.500V10" stroke="#a8a8a8" stroke-width="1" fill="none" stroke-linecap="round" stroke-linejoin="round"/>
  <g fill="#1f1f1f"><g id="dots"><rect x="1895" y="467.500" width="1.400" height="1.400"/><rect x="1898" y="467.500" width="1.400" height="1.400"/><rect x="1901" y="467.500" width="1.400" height="1.400"/><rect x="1904" y="467.500" width="1.400" height="1.400"/><rect x="1895" y="470.500" width="1.400" height="1.400"/><rect x="1898" y="470.500" width="1.400" height="1.400"/><rect x="1901" y="470.500" width="1.400" height="1.400"/><rect x="1904" y="470.500" width="1.400" height="1.400"/></g>
  <use href="#dots" y="283"/></g>
  <g id="lk"><path d="M1867.500 499V496.500A3 3 0 0 1 1873.500 496.500V498.500" class="ic" style="stroke-width:1.100"/><rect x="1872.500" y="498.500" width="8" height="5.500" class="ic" style="stroke-width:1.100"/><rect x="1875.800" y="500.500" width="1.400" height="1.800" fill="#e6e6e6"/><circle cx="1894" cy="500.200" r="2" fill="#e6e6e6"/></g>
  <use href="#lk" y="19.700"/><use href="#lk" y="39.500"/>
  <use href="#lk" y="65"/><use href="#lk" y="85"/><use href="#lk" y="105"/>
  <use href="#lk" y="155"/><use href="#lk" y="175"/><use href="#lk" y="195"/>
  <circle cx="1894" cy="630" r="2" fill="#e6e6e6"/>
  <path d="M1854.500 628.800L1857.600 631.800L1860.700 628.800" class="chev"/>
  <path d="M1650.500 721L1654.500 725.500L1650.500 730" class="chev" style="stroke-width:1.100"/>
  <path d="M1636.500 748L1640.500 752.500L1636.500 757" class="chev" style="stroke-width:1.100"/>
  <!-- tabs icons -->
  <g stroke="#688edc" stroke-width="1.100" fill="none">
    <path d="M1604.500 702.500A6.500 6.500 0 1 0 1608.400 712"/>
    <circle cx="1602.800" cy="708.800" r="3.100" fill="#688edc" stroke="none"/>
    <circle cx="1608" cy="703.900" r="2.100" fill="#5f80c6" stroke="none"/>
    <path d="M1608.600 733.200C1608.800 731.200 1607 730.500 1605.500 731.200L1599 733.800A5.600 5.600 0 1 0 1606.500 741.500Z" stroke-linejoin="round"/>
    <circle cx="1601.600" cy="738.400" r="2.500" stroke-width="1.900"/>
    <circle cx="1607" cy="733" r="1" fill="#688edc" stroke="none"/>
  </g>
  <g stroke="#1dbf98" stroke-width="1.200" fill="none"><path d="M1600 760H1606M1599 762L1602.300 768M1607 762L1603.700 768"/><rect x="1596.500" y="758.300" width="3.300" height="3.300"/><rect x="1606.300" y="758.300" width="3.300" height="3.300"/></g>
</svg>
<!-- POPOVER -->
<div class="a" style="left:1534px;top:76.500px;width:40px;height:5px;background:#2c2c2c;border-radius:4px 0 0 0"></div>
<style>
.pb{position:absolute;height:19px;line-height:19px;background:#545454;color:#e6e6e6;text-align:center;font-size:11px;white-space:nowrap}
.pb.on{background:#4772b3;color:#fff}
.pb.tl{text-align:left;padding-left:7.500px}
.pl{position:absolute;left:1448px;line-height:16px;font-size:11px;color:#c4c4c4;white-space:nowrap}
.cb{position:absolute;left:1447.800px;width:12.400px;height:12.400px;border-radius:3px;background:#545454}
.cb.on{background:#4772b3}
.cb.dim{background:#474747}
</style>
<div class="a" style="left:1437.200px;top:79.500px;width:259.300px;height:610.300px;background:#181818;border-radius:5px;box-shadow:0 1px 3px rgba(0,0,0,0.5),0 0 0 0.500px rgba(20,20,20,0.5)"></div>
<svg style="left:1555px;top:70px" width="24" height="11" viewBox="1555 70 24 11"><path d="M1557.500 80.500L1567.400 69.600L1577.200 80.500Z" fill="#181818"/></svg>
<div class="pl" style="top:90.500px">视图着色方式</div>
<div class="pl" style="top:126.500px">光照</div>
<div class="pb on" style="left:1447.500px;top:147.500px;width:67.5px;border-radius:4px 0 0 4px">棚灯</div>
<div class="pb" style="left:1515.500px;top:147.500px;width:68.500px">快照材质</div>
<div class="pb" style="left:1584.500px;top:147.500px;width:70px;border-radius:0 4px 4px 0">平展</div>
<div class="a" style="left:1447.500px;top:169.500px;width:207px;height:71.500px;border-radius:4px;background:#262626;box-shadow:0 0 0 1px #3c3c3c inset"></div>
<div class="a" style="left:1447.500px;top:243.500px;width:19px;height:19px;border-radius:4px;background:#545454"></div>
<div class="a" style="left:1475.500px;top:243.500px;width:179px;height:19px;border-radius:4px;background:#373737"></div>
<div class="a" style="left:1491px;top:243.500px;line-height:19px;font-size:11px;color:#8c8c8c">旋转</div>
<div class="a" style="left:1611px;top:243.500px;width:30.500px;text-align:right;line-height:19px;font-size:11.500px;color:#8c8c8c">0°</div>
<div class="pl" style="top:280.500px">线框颜色</div>
<div class="pb on" style="left:1447.500px;top:301.500px;width:78.5px;border-radius:4px 0 0 4px">主题</div>
<div class="pb" style="left:1526.500px;top:301.500px;width:79.500px">物体</div>
<div class="pb" style="left:1606.500px;top:301.500px;width:80.500px;border-radius:0 4px 4px 0">随机</div>
<div class="pl" style="top:332.500px">颜色</div>
<div class="pb on tl" style="left:1447.500px;top:353.500px;width:76.5px;height:19.500px;border-radius:4px 0 0 0">材质</div>
<div class="pb tl" style="left:1524.500px;top:353.500px;width:81.500px;height:19.500px">物体</div>
<div class="pb tl" style="left:1606.500px;top:353.500px;width:80.500px;height:19.500px;border-radius:0 4px 0 0">属性</div>
<div class="pb tl" style="left:1447.500px;top:373.500px;width:76.5px;height:20.500px;line-height:20.500px;border-radius:0 0 0 4px">单一</div>
<div class="pb tl" style="left:1524.500px;top:373.500px;width:81.500px;height:20.500px;line-height:20.500px">随机</div>
<div class="pb tl" style="left:1606.500px;top:373.500px;width:80.500px;height:20.500px;line-height:20.500px;border-radius:0 0 4px 0">纹理</div>
<div class="pl" style="top:407px">背景</div>
<div class="pb on" style="left:1447.500px;top:427.500px;width:78.5px;border-radius:4px 0 0 4px">主题</div>
<div class="pb" style="left:1526.500px;top:427.500px;width:79.500px">世界</div>
<div class="pb" style="left:1606.500px;top:427.500px;width:80.500px;border-radius:0 4px 4px 0">视图</div>
<div class="pl" style="top:464.500px">选项</div>
<div class="cb" style="top:488.500px"></div>
<div class="pl" style="left:1464px;top:487px;color:#d0d0d0">背面剔除</div>
<div class="cb" style="top:510.800px;background:#4c4c4c"></div>
<div class="a" style="left:1468px;top:508px;width:219px;height:18px;border-radius:4px;background:#393939;overflow:hidden"><div class="a" style="left:0;top:0;width:107.500px;height:18px;background:#3b5478"></div></div>
<div class="a" style="left:1483.500px;top:508px;line-height:18px;font-size:11px;color:#9aa0aa">透视模式</div>
<div class="a" style="left:1630px;top:508px;width:43px;text-align:right;line-height:18px;font-size:11.500px;color:#8e8e8e">0.500</div>
<div class="cb" style="top:532.800px;background:#4c4c4c"></div>
<div class="a" style="left:1468px;top:530px;width:199px;height:18px;border-radius:4px 0 0 4px;background:#393939;overflow:hidden"><div class="a" style="left:0;top:0;width:98px;height:18px;background:#3b5478"></div></div>
<div class="a" style="left:1667.500px;top:530px;width:19.500px;height:18px;border-radius:0 4px 4px 0;background:#2e2e2e"></div>
<div class="a" style="left:1483.500px;top:530px;line-height:18px;font-size:11px;color:#9aa0aa">阴影</div>
<div class="a" style="left:1610px;top:530px;width:43px;text-align:right;line-height:18px;font-size:11.500px;color:#8e8e8e">0.500</div>
<div class="cb on" style="top:554.600px"></div>
<div class="pl" style="left:1464px;top:552.700px;color:#e6e6e6;font-size:11.500px">Cavity</div>
<div class="pl" style="left:1555.500px;top:552.800px;">类型:</div>
<div class="a" style="left:1594.500px;top:551.500px;width:92.500px;height:19px;border-radius:4px;background:#272727;box-shadow:0 0 0 1px #444 inset"></div>
<div class="a" style="left:1602px;top:551.500px;line-height:19px;font-size:11px;color:#e6e6e6">屏幕</div>
<div class="pl" style="top:575px">屏幕空间</div>
<div class="pb on" style="left:1447.500px;top:595.500px;width:59px;padding-right:6px;border-radius:4px 0 0 4px">脊线</div>
<div class="pb" style="left:1506.500px;top:595.500px;width:60px;padding-left:4px;font-size:11.500px">1.000</div>
<div class="pb on" style="left:1566.500px;top:595.500px;width:58.500px;padding-right:6px">谷线</div>
<div class="pb" style="left:1625px;top:595.500px;width:62px;padding-left:4px;border-radius:0 4px 4px 0;font-size:11.500px">1.000</div>
<div class="cb dim" style="top:621px"></div>
<div class="pl" style="left:1464px;top:619.500px;color:#7e7e7e">景深</div>
<div class="cb on" style="top:642.500px"></div>
<div class="pl" style="left:1464px;top:641px;color:#e6e6e6">轮廓</div>
<div class="a" style="left:1571.500px;top:639.500px;width:115.500px;height:19.500px;border-radius:4px;background:#000;box-shadow:0 0 0 1px #3d3d3d inset"></div>
<div class="cb on" style="top:664.500px"></div>
<div class="pl" style="left:1464px;top:663px;color:#e6e6e6">高光光照</div>
<svg style="left:1437px;top:80px" width="260" height="611" viewBox="1437 80 260 611">
  <defs>
    <radialGradient id="sph" cx="1550.7" cy="204.9" r="29.6" fx="1544.2" fy="199.4" gradientUnits="userSpaceOnUse">
      <stop offset="0" stop-color="#dcdcdc"/>
      <stop offset="0.08" stop-color="#c4c4c4"/>
      <stop offset="0.22" stop-color="#b2b2b2"/>
      <stop offset="0.5" stop-color="#a6a6a6"/>
      <stop offset="0.75" stop-color="#9a9a9a"/>
      <stop offset="0.9" stop-color="#888"/>
      <stop offset="1" stop-color="#6c6c6c"/>
    </radialGradient>
    <linearGradient id="sph2" x1="1535" y1="185" x2="1572" y2="228" gradientUnits="userSpaceOnUse"><stop offset="0.68" stop-color="#000" stop-opacity="0"/><stop offset="1" stop-color="#000" stop-opacity="0.4"/></linearGradient>
    <g id="ck"><path d="M1451 561.300L1453.700 564L1458.300 558.300" stroke="#fff" stroke-width="1.500" fill="none" stroke-linecap="round" stroke-linejoin="round"/></g>
  </defs>
  <circle cx="1550.700" cy="204.900" r="29.600" fill="url(#sph)"/>
  <circle cx="1550.700" cy="204.900" r="29.600" fill="url(#sph2)"/>
  <!-- gear -->
  <g id="gear"><path d="M1673.53 173.78L1673.76 171.69L1676.04 171.69L1676.27 173.78L1677.55 174.31L1679.19 172.99L1680.81 174.61L1679.49 176.25L1680.02 177.53L1682.11 177.76L1682.11 180.04L1680.02 180.27L1679.49 181.55L1680.81 183.19L1679.19 184.81L1677.55 183.49L1676.27 184.02L1676.04 186.11L1673.76 186.11L1673.53 184.02L1672.25 183.49L1670.61 184.81L1668.99 183.19L1670.31 181.55L1669.78 180.27L1667.69 180.04L1667.69 177.76L1669.78 177.53L1670.31 176.25L1668.99 174.61L1670.61 172.99L1672.25 174.31ZM1672.40 178.90A2.5 2.5 0 1 0 1677.40 178.90A2.5 2.5 0 1 0 1672.40 178.90Z" fill="#ececec" fill-rule="evenodd"/></g>
  <use href="#gear" transform="translate(2.400 360.200)" opacity="0.720"/>
  <!-- world icon -->
  <circle cx="1457.100" cy="253.200" r="6.300" class="ic" style="stroke-width:1.100"/>
  <path d="M1452.500 249.500C1454 248.200 1456.500 247.600 1458.300 248.300C1458.800 249.800 1457.500 250.600 1456.300 251C1457.500 252 1459.300 252.300 1459.200 254.300C1458 255 1458.300 257 1456.800 258.300C1455.800 257 1456.300 255 1454.800 254C1453.300 253.200 1452 251.500 1452.500 249.500Z" fill="#e6e6e6"/>
  <path d="M1460.500 249.500C1461.800 250.500 1462.800 252 1462.900 253.500C1461.800 253 1460.800 251.500 1460.500 249.500Z" fill="#e6e6e6"/>
  <path d="M1450.200 259.800L1452.300 258M1462 248.300L1464.300 246.300" class="ic" style="stroke-width:1.100"/>
  <use href="#ck"/>
  <use href="#ck" y="88"/>
  <use href="#ck" y="110"/>
  <path d="M1677.200 560.300L1680.100 563.300L1683 560.300" class="chev"/>
</svg>
</div>
</body>
</html>
